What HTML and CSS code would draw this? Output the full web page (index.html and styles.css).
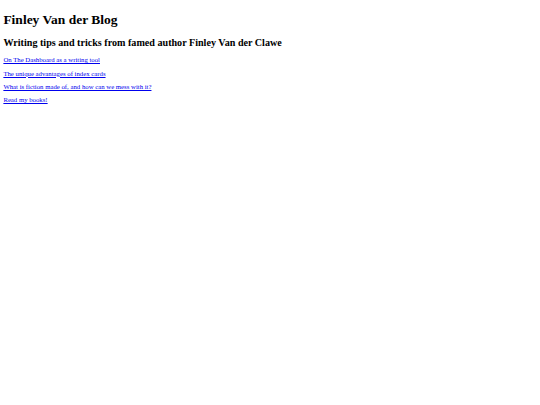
FILE: index.html
```html
<!DOCTYPE html>
<html>
<head>
<meta charset="utf-8">
<title>Finley Van der Blog</title>
<link rel="stylesheet" href="styles.css">
</head>
<body class="page">
<h1 class="title">Finley Van der Blog</h1>
<h2 class="subtitle">Writing tips and tricks from famed author Finley Van der Clawe</h2>
<p class="item"><a href="#">On The Dashboard as a writing tool</a></p>
<p class="item"><a href="#">The unique advantages of index cards</a></p>
<p class="item"><a href="#">What is fiction made of, and how can we mess with it?</a></p>
<p class="item"><a href="#">Read my books!</a></p>
</body>
</html>
```
FILE: styles.css
```css
html { background: #fff; }
.page {
  margin: 3.375px;
  font-family: "Liberation Serif", "Times New Roman", serif;
  font-size: 6.75px;
  color: #000;
}
.title { font-size: 13.5px; margin: 8.6px 0 9.05px; }
.subtitle { font-size: 10.125px; margin: 8.6px 0 8.4px; }
.item { margin: 6.3px 0; }
.item a { color: #0000ee; }
```
